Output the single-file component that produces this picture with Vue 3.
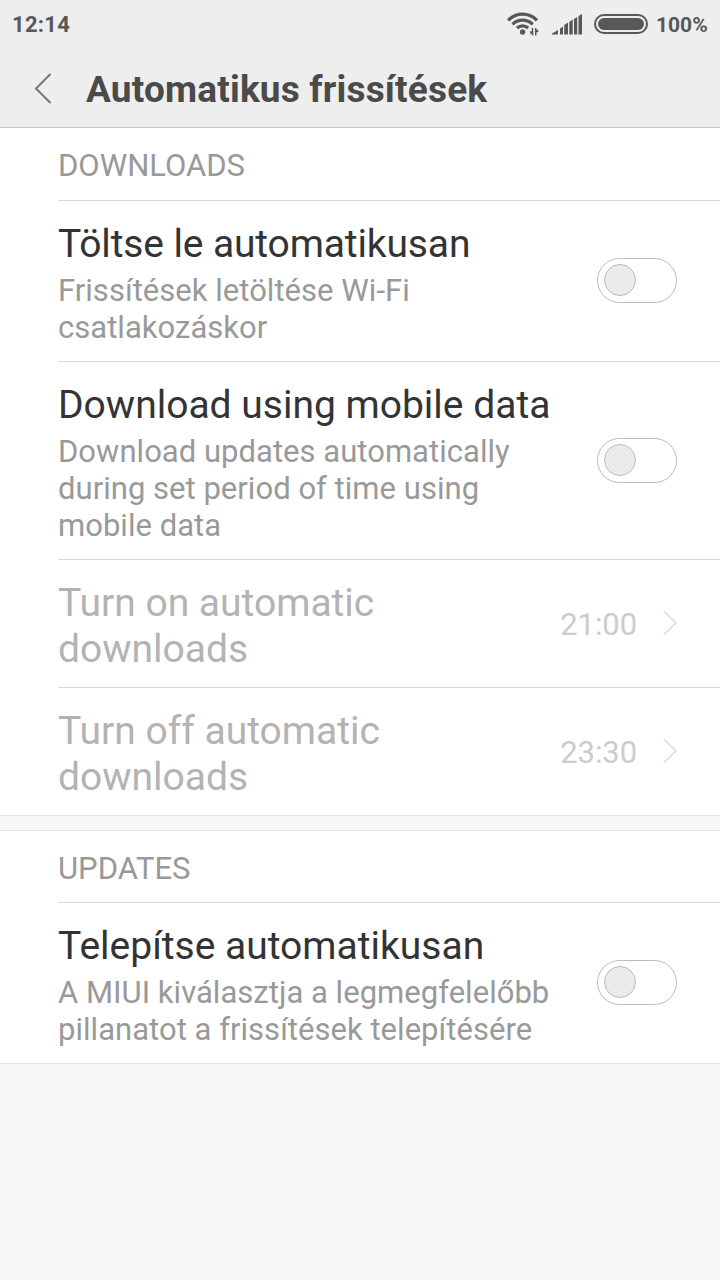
<template>
  <div class="screen">
    <div class="statusbar">
      <span class="clock">12:14</span>
      <div class="indicators">
        <svg class="wifi" width="33" height="25" viewBox="0 0 33 25" fill="none" stroke="#585858" stroke-width="3.200">
          <path d="M1.200 9.300 A20 20 0 0 1 30 9.300" />
          <path d="M5.500 13.300 A14.500 14.500 0 0 1 25.700 13.300" />
          <path d="M10 17 A8.500 8.500 0 0 1 21.200 17" />
          <circle cx="15.600" cy="21" r="2.700" fill="#585858" stroke="none" />
          <path d="M25.500 17 V24.500 M28.700 17 V24.500" stroke-width="1.500" />
          <path d="M23.200 21.500 H25.500 M28.700 20 H31.300" stroke-width="2.500" />
        </svg>
        <svg class="signal" width="30" height="21" viewBox="0 0 30 21" fill="#585858">
          <path d="M0 20.500 V19.500 L6 16 V20.500z M8 20.500 V14.500 L11 12.500 V20.500z M12.200 20.500 V11 L16 8.500 V20.500z M17.300 20.500 V8 L20.700 5.500 V20.500z M22 20.500 V5 L25.200 3 V20.500z M26.500 20.500 V2 L30 0 V20.500z" />
        </svg>
        <div class="battery"><div class="level" /></div>
        <span class="percent">100%</span>
      </div>
    </div>

    <header class="titlebar">
      <svg class="back" width="18" height="32" viewBox="0 0 18 32" fill="none" stroke="#777" stroke-width="2">
        <path d="M16.500 1 L2 15.500 L16.500 30" />
      </svg>
      <h1>Automatikus frissítések</h1>
    </header>

    <section v-for="group in groups" :key="group.name" class="group">
      <h2>{{ group.name }}</h2>
      <div v-for="item in group.items" :key="item.title" class="row" :class="{ disabled: item.time }">
        <div class="label">
          <div v-for="line in item.title" :key="line" class="title">{{ line }}</div>
          <div v-if="item.summary" class="summary">
            <div v-for="line in item.summary" :key="line">{{ line }}</div>
          </div>
        </div>
        <div v-if="item.time" class="value">
          <span class="time">{{ item.time }}</span>
          <svg class="arrow" width="15" height="26" viewBox="0 0 15 26" fill="none" stroke="#e0e0e0" stroke-width="1.800">
            <path d="M1 1.500 L13 13 L1 24.500" />
          </svg>
        </div>
        <div v-else class="switch"><div class="knob" /></div>
      </div>
    </section>
  </div>
</template>

<script setup>
const groups = [
  {
    name: 'DOWNLOADS',
    items: [
      {
        title: ['Töltse le automatikusan'],
        summary: ['Frissítések letöltése Wi-Fi', 'csatlakozáskor']
      },
      {
        title: ['Download using mobile data'],
        summary: ['Download updates automatically', 'during set period of time using', 'mobile data']
      },
      { title: ['Turn on automatic', 'downloads'], time: '21:00' },
      { title: ['Turn off automatic', 'downloads'], time: '23:30' }
    ]
  },
  {
    name: 'UPDATES',
    items: [
      {
        title: ['Telepítse automatikusan'],
        summary: ['A MIUI kiválasztja a legmegfelelőbb', 'pillanatot a frissítések telepítésére']
      }
    ]
  }
]
</script>

<style>
body {
  background: #f7f7f7;
}
</style>

<style scoped>
.screen {
  min-height: 1280px;
  font-family: Roboto, "Liberation Sans", sans-serif;
  background: #f7f7f7;
}

.screen * {
  box-sizing: border-box;
}

.statusbar {
  display: flex;
  justify-content: space-between;
  align-items: center;
  height: 50px;
  padding: 0 12px 2px;
  background: #eee;
  color: #585858;
  font-size: 22px;
  font-weight: 700;
}

.clock {
  letter-spacing: 0.3px;
}

.indicators {
  display: flex;
  align-items: center;
}

.wifi {
  margin-top: -2px;
}

.percent {
  width: 52px;
  margin-top: 2px;
  font-size: 21px;
}

.signal {
  margin: 1px 12px 0 12px;
}

.battery {
  width: 54px;
  height: 20px;
  margin-right: 8px;
  padding: 2px;
  border: 2px solid #585858;
  border-radius: 10px;
}

.level {
  height: 100%;
  border-radius: 6px;
  background: #585858;
}

.titlebar {
  display: flex;
  align-items: center;
  height: 78px;
  padding-left: 34px;
  background: #eee;
  border-bottom: 1px solid #c8c8c8;
}

h1 {
  margin: 2px 0 0 34px;
  font-size: 37px;
  font-weight: 700;
  letter-spacing: 0.18px;
  color: #4a4a4a;
}

.group {
  background: #fff;
  border-bottom: 1px solid #e2e2e2;
}

h2 {
  height: 72px;
  margin: 0;
  padding-left: 58px;
  font-size: 31px;
  font-weight: 400;
  line-height: 76px;
  color: #999;
}

.group + .group {
  margin-top: 14px;
  border-top: 1px solid #e2e2e2;
}

.group + .group h2 {
  height: 71px;
}

.row {
  display: flex;
  align-items: center;
  margin-left: 58px;
  padding: 20px 43px 15px 0;
  border-top: 1px solid #d8d8d8;
}

.label {
  flex: 1;
  white-space: nowrap;
}

.title {
  font-size: 39px;
  line-height: 46px;
  color: #333;
}

.group:first-of-type h2 + .row .title {
  letter-spacing: -0.13px;
}

.summary {
  margin-top: 5px;
  font-size: 31px;
  line-height: 37px;
  letter-spacing: 0.03px;
  color: #999;
}

.disabled .title {
  color: #b3b3b3;
}

.value {
  display: flex;
  align-items: center;
  margin: -6px -1px 0 0;
}

.time {
  margin: 2px 26px 0 0;
  font-size: 31px;
  letter-spacing: -0.1px;
  color: #ccc;
}

.switch {
  width: 80px;
  height: 45px;
  margin-top: -6px;
  padding: 5px 6px;
  border: 1px solid #bcbcbc;
  border-radius: 23px;
}

.knob {
  width: 32px;
  height: 32px;
  border: 1px solid #bcbcbc;
  border-radius: 50%;
  background: #ebebeb;
}
</style>
